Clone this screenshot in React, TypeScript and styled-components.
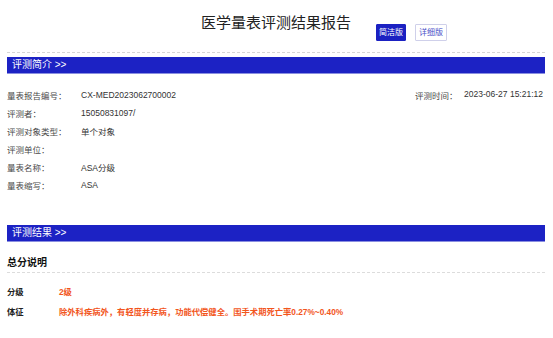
import React from 'react';
import styled, { createGlobalStyle } from 'styled-components';

const GlobalStyle = createGlobalStyle`
  html, body {
    margin: 0;
    padding: 0;
    background: #fff;
  }
  body {
    font-family: "Liberation Sans", "Noto Sans CJK SC", sans-serif;
    color: #333;
  }
`

const Page = styled.div`
  width: 538px;
  padding: 0 8px 0 7px;
`

const Header = styled.div`
  display: grid;
  grid-template-columns: 1fr auto 1fr;
  height: 52px;
  border-bottom: 1px dashed #d6d6d6;
`

const Title = styled.h1`
  grid-column: 2;
  margin: 12px 0 0;
  font-size: 15px;
  line-height: 22px;
  font-weight: normal;
  color: #222;
`

const Switch = styled.div`
  display: flex;
  gap: 9px;
  padding: 24px 0 0 25px;
  align-items: flex-start;
`

const VersionButton = styled.button<{ $active?: boolean }>`
  height: 17px;
  padding: 0 ${p => (p.$active ? '2px' : '3px')};
  font-family: inherit;
  font-size: 8px;
  line-height: 15px;
  border: 1px solid ${p => (p.$active ? '#1b21c2' : '#cfd0ea')};
  background: ${p => (p.$active ? '#1b21c2' : '#fff')};
  color: ${p => (p.$active ? '#fff' : '#4a50c8')};
  border-radius: 1px;
  cursor: pointer;
`

const SectionBar = styled.div<{ $top: number }>`
  margin-top: ${p => p.$top}px;
  height: 16px;
  background: #1c22c4;
  color: #fff;
  font-size: 10px;
  line-height: 16px;
  padding-left: 5px;
  border-bottom: 1px solid #8a8fe0;
`

const Info = styled.div`
  padding-top: 12px;
`

const Row = styled.div<{ $h?: number; $size?: number }>`
  display: flex;
  align-items: center;
  height: ${p => p.$h ?? 18}px;
  font-size: ${p => p.$size ?? 8.5}px;
`

const Label = styled.span<{ $w: number; $bold?: boolean }>`
  width: ${p => p.$w}px;
  flex-shrink: 0;
  color: ${p => (p.$bold ? '#222' : '#4a4a4a')};
  font-weight: ${p => (p.$bold ? 'bold' : 'normal')};
`

const Value = styled.span<{ $accent?: boolean }>`
  color: ${p => (p.$accent ? '#f2561d' : '#333')};
  font-weight: ${p => (p.$accent ? 'bold' : 'normal')};
`

const Aside = styled.div`
  margin-left: auto;
  display: flex;
  padding-right: 2px;
`

const SubTitle = styled.div`
  margin-top: 11px;
  height: 19px;
  line-height: 19px;
  font-size: 10px;
  font-weight: bold;
  color: #111;
  border-bottom: 1px dashed #dcdcdc;
`

const Results = styled.div`
  padding-top: 8px;
`

const info: [string, string][] = [
  ['评测者：', '15050831097/'],
  ['评测对象类型：', '单个对象'],
  ['评测单位：', ''],
  ['量表名称：', 'ASA分级'],
  ['量表缩写：', 'ASA'],
]

const App: React.FC = () => {
  return (
    <Page>
      <GlobalStyle />
      <Header>
        <Title>医学量表评测结果报告</Title>
        <Switch>
          <VersionButton $active>简洁版</VersionButton>
          <VersionButton>详细版</VersionButton>
        </Switch>
      </Header>

      <SectionBar $top={4}>评测简介 &gt;&gt;</SectionBar>
      <Info>
        <Row>
          <Label $w={74}>量表报告编号：</Label>
          <Value>CX-MED2023062700002</Value>
          <Aside>
            <Label $w={49}>评测时间：</Label>
            <Value>2023-06-27 15:21:12</Value>
          </Aside>
        </Row>
        {info.map(([k, v]) => (
          <Row key={k}>
            <Label $w={74}>{k}</Label>
            <Value>{v}</Value>
          </Row>
        ))}
      </Info>

      <SectionBar $top={31}>评测结果 &gt;&gt;</SectionBar>
      <SubTitle>总分说明</SubTitle>
      <Results>
        <Row $h={20} $size={8.3}>
          <Label $w={52} $bold>分级</Label>
          <Value $accent>2级</Value>
        </Row>
        <Row $h={20} $size={8.3}>
          <Label $w={52} $bold>体征</Label>
          <Value $accent>除外科疾病外，有轻度并存病，功能代偿健全。围手术期死亡率0.27%~0.40%</Value>
        </Row>
      </Results>
    </Page>
  )
}

export default App
